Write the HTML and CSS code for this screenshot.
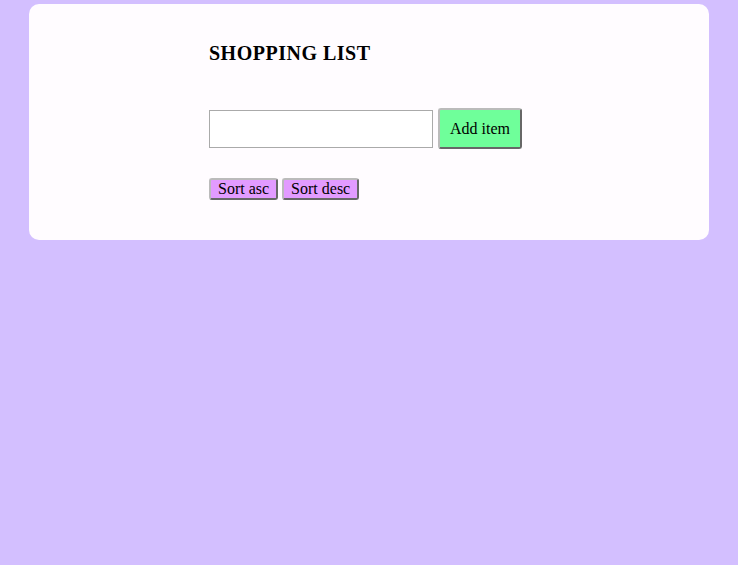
FILE: index.html
```html
<!DOCTYPE html>
<html>
<head>
<meta charset="utf-8">
<link rel="stylesheet" href="styles.css">
</head>
<body>
<div class="card">
  <div class="inner">
    <h1 class="title">SHOPPING LIST</h1>
    <div class="add-row">
      <input class="item-input" type="text">
      <button class="add-btn">Add item</button>
    </div>
    <div class="sort-row">
      <button class="sort-btn">Sort asc</button>
      <button class="sort-btn">Sort desc</button>
    </div>
  </div>
</div>
</body>
</html>
```
FILE: styles.css
```css
html, body {
  margin: 0;
  background: #d3bfff;
  font-family: "Liberation Serif", serif;
}
body {
  padding: 4px 29px;
}
.card {
  background: #fffcff;
  border-radius: 10px;
  height: 236px;
  box-sizing: border-box;
  padding: 38px 0 0 180px;
}
.inner {
  width: 320px;
}
.title {
  margin: 0;
  font-size: 20px;
  letter-spacing: 0.5px;
  font-weight: bold;
  font-family: "Liberation Serif", serif;
  line-height: 22px;
  color: #000;
}
.add-row {
  display: flex;
  align-items: center;
  gap: 5px;
  margin-top: 44px;
}
.item-input {
  width: 224px;
  height: 38px;
  box-sizing: border-box;
  border: 1px solid #aaa;
  margin: 0;
}
.add-btn {
  background: #6fff9a;
  border: 2px outset #bbb;
  border-radius: 3px;
  height: 41px;
  padding: 0 10px;
  font-family: "Liberation Serif", serif;
  font-size: 16px;
  color: #000;
}
.sort-row {
  display: flex;
  gap: 4px;
  margin-top: 29px;
}
.sort-btn {
  background: #e29bff;
  border: 2px outset #bbb;
  border-radius: 3px;
  height: 22px;
  padding: 0 7px;
  font-family: "Liberation Serif", serif;
  font-size: 16px;
  line-height: 16px;
  color: #000;
}
```
